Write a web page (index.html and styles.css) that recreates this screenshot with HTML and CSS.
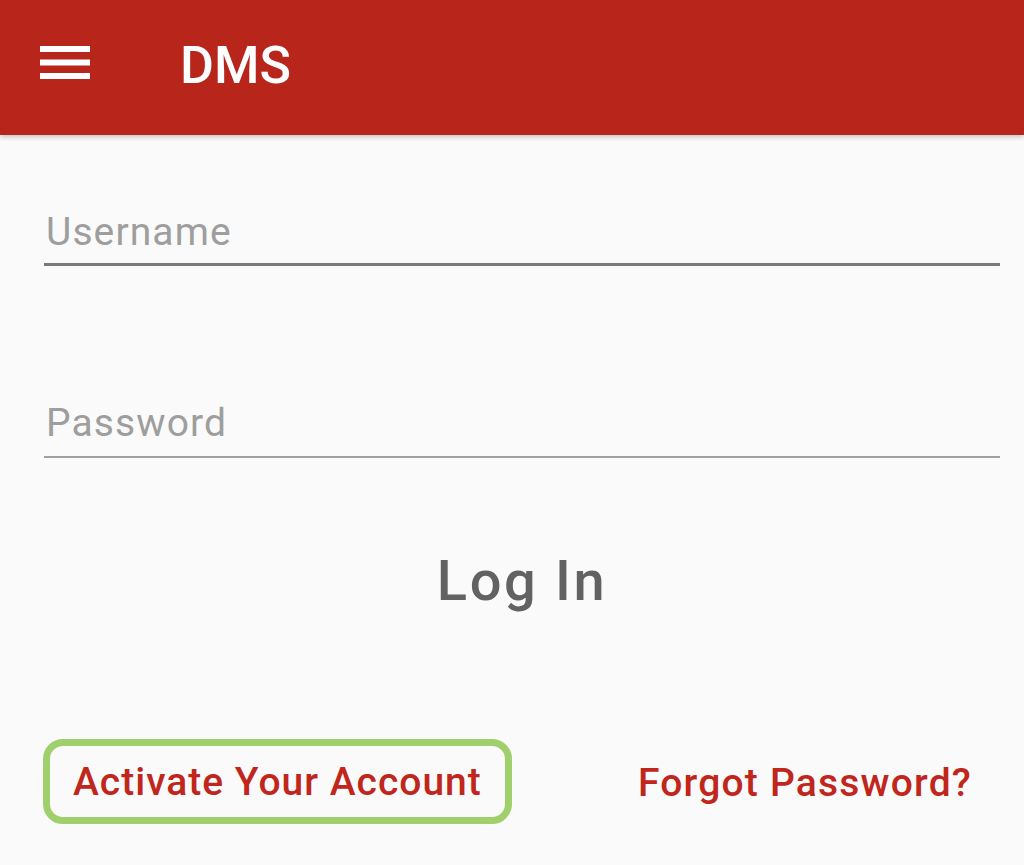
FILE: index.html
```html
<!DOCTYPE html>
<html>
<head>
<meta charset="utf-8">
<link rel="stylesheet" href="styles.css">
</head>
<body>
<header class="appbar">
  <svg class="menu" width="50" height="34" viewBox="0 0 50 34" aria-hidden="true">
    <rect x="0" y="0" width="50" height="6" fill="#fff"/>
    <rect x="0" y="13.5" width="50" height="6" fill="#fff"/>
    <rect x="0" y="27" width="50" height="6" fill="#fff"/>
  </svg>
  <div class="title">DMS</div>
</header>
<main class="content">
  <div class="field field-focused"><span class="placeholder">Username</span></div>
  <div class="field field-second"><span class="placeholder">Password</span></div>
  <div class="login">Log In</div>
  <div class="links">
    <div class="activate">Activate Your Account</div>
    <div class="forgot">Forgot Password?</div>
  </div>
</main>
</body>
</html>
```
FILE: styles.css
```css
html, body {
  margin: 0;
  padding: 0;
  background: #fafafa;
  font-family: Roboto, "Liberation Sans", sans-serif;
}
.appbar {
  height: 135px;
  background: #b8261b;
  display: flex;
  align-items: center;
  box-shadow: 0 2px 5px rgba(0,0,0,0.22);
  position: relative;
}
.menu {
  margin-left: 40px;
  margin-top: -9px;
}
.title {
  margin-left: 90px;
  color: #fff;
  font-size: 52px;
  font-weight: 500;
  line-height: 61px;
  margin-top: -4px;
}
.content {
  padding: 0 24px 0 44px;
}
.field {
  font-size: 39px;
  line-height: 46px;
  color: #9e9e9e;
  padding-left: 2px;
  letter-spacing: 1.1px;
}
.field-focused {
  margin-top: 74px;
  padding-bottom: 8px;
  border-bottom: 3px solid #7a7a7a;
}
.field-second {
  margin-top: 134px;
  padding-bottom: 10px;
  border-bottom: 2px solid #a0a0a0;
}
.login {
  margin-top: 90px;
  text-align: center;
  font-size: 56px;
  line-height: 66px;
  font-weight: 500;
  color: #626262;
  letter-spacing: 2.6px;
}
.links {
  margin-top: 125px;
  display: flex;
  justify-content: space-between;
  align-items: center;
  margin-left: -1px;
}
.activate {
  border: 7px solid #9fd06c;
  border-radius: 20px;
  padding: 12.5px 23px;
  font-size: 39px;
  line-height: 46px;
  font-weight: 500;
  letter-spacing: 1px;
  color: #c0261c;
}
.forgot {
  margin-right: 28px;
  margin-top: 2px;
  font-size: 39px;
  line-height: 46px;
  font-weight: 500;
  letter-spacing: 1.2px;
  color: #c0261c;
}
```
